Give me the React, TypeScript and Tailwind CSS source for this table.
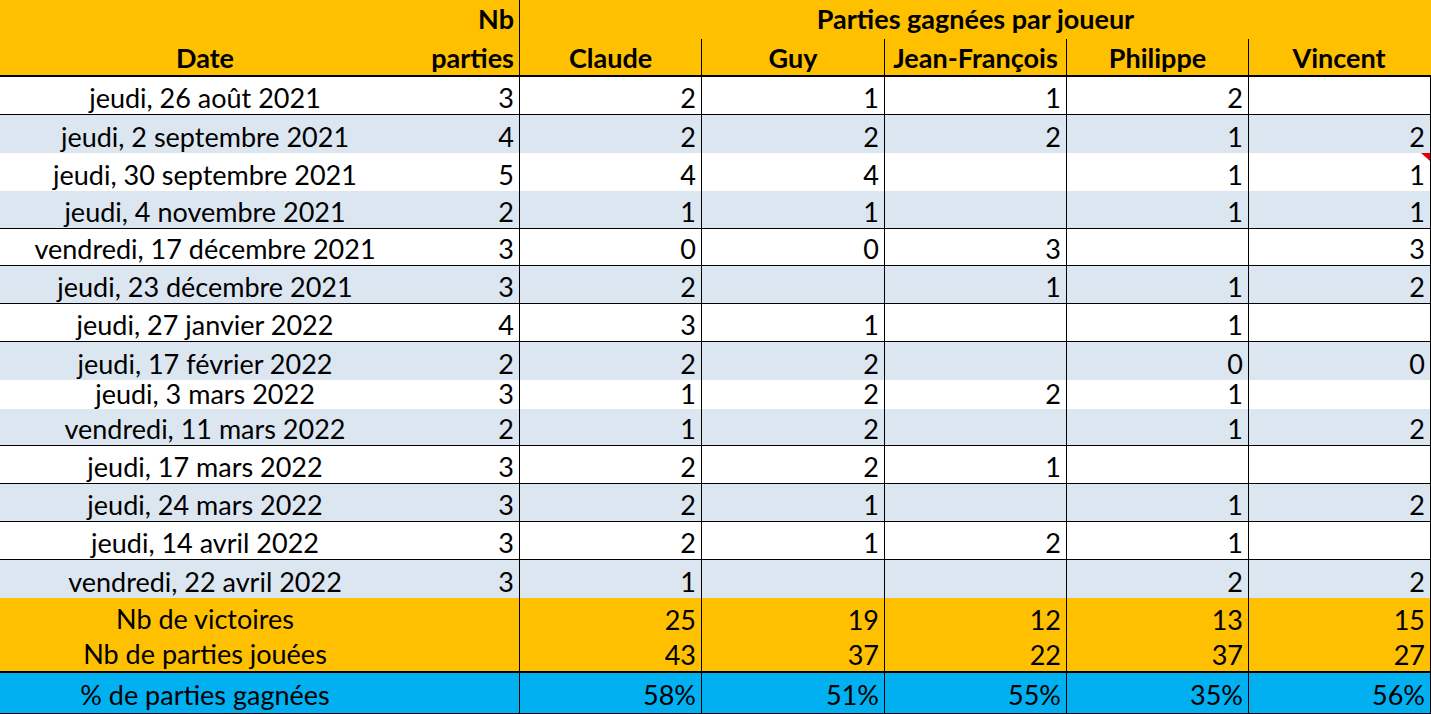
import React from 'react';

type Row = {
  date: string;
  nb: string;
  wins: string[];
  h: string;
  line: boolean;
  alt: boolean;
  note?: boolean;
};

const rows: Row[] = [
  { date: 'jeudi, 26 août 2021', nb: '3', wins: ['2', '1', '1', '2', ''], h: 'h-[38px]', line: true, alt: false },
  { date: 'jeudi, 2 septembre 2021', nb: '4', wins: ['2', '2', '2', '1', '2'], h: 'h-[38px]', line: false, alt: true },
  { date: 'jeudi, 30 septembre 2021', nb: '5', wins: ['4', '4', '', '1', '1'], h: 'h-[38px]', line: false, alt: false, note: true },
  { date: 'jeudi, 4 novembre 2021', nb: '2', wins: ['1', '1', '', '1', '1'], h: 'h-[38px]', line: true, alt: true },
  { date: 'vendredi, 17 décembre 2021', nb: '3', wins: ['0', '0', '3', '', '3'], h: 'h-[37px]', line: true, alt: false },
  { date: 'jeudi, 23 décembre 2021', nb: '3', wins: ['2', '', '1', '1', '2'], h: 'h-[38px]', line: true, alt: true },
  { date: 'jeudi, 27 janvier 2022', nb: '4', wins: ['3', '1', '', '1', ''], h: 'h-[38px]', line: true, alt: false },
  { date: 'jeudi, 17 février 2022', nb: '2', wins: ['2', '2', '', '0', '0'], h: 'h-[38px]', line: false, alt: true },
  { date: 'jeudi, 3 mars 2022', nb: '3', wins: ['1', '2', '2', '1', ''], h: 'h-[29px]', line: false, alt: false },
  { date: 'vendredi, 11 mars 2022', nb: '2', wins: ['1', '2', '', '1', '2'], h: 'h-[37px]', line: true, alt: true },
  { date: 'jeudi, 17 mars 2022', nb: '3', wins: ['2', '2', '1', '', ''], h: 'h-[38px]', line: true, alt: false },
  { date: 'jeudi, 24 mars 2022', nb: '3', wins: ['2', '1', '', '1', '2'], h: 'h-[38px]', line: true, alt: true },
  { date: 'jeudi, 14 avril 2022', nb: '3', wins: ['2', '1', '2', '1', ''], h: 'h-[38px]', line: true, alt: false },
  { date: 'vendredi, 22 avril 2022', nb: '3', wins: ['1', '', '', '2', '2'], h: 'h-[38px]', line: false, alt: true },
];

const players = ['Claude', 'Guy', 'Jean-François', 'Philippe', 'Vincent'];
const victoires = ['25', '19', '12', '13', '15'];
const jouees = ['43', '37', '22', '37', '27'];
const pourcent = ['58%', '51%', '55%', '35%', '56%'];

const grid = 'grid grid-cols-[410px_110px_182px_183px_182px_182px_182px]';

function Num({ v, note }: { v: string; note?: boolean }) {
  return (
    <div className="relative flex items-end justify-end border-r border-black pr-[5px] pb-[3px]">
      {note && (
        <span className="absolute right-0 top-0 h-0 w-0 border-l-[9px] border-t-[8px] border-l-transparent border-t-[#e00000]" />
      )}
      {v}
    </div>
  );
}

export default function App() {
  return (
    <div
      className="w-[1431px] h-[714px] overflow-hidden bg-white text-[27px] leading-none text-black"
      style={{ fontFamily: 'Lato, "Open Sans", sans-serif' }}
    >
      {/* en-tête */}
      <div className={`${grid} h-[39px] bg-[#ffc000] font-bold`}>
        <div />
        <div className="flex items-end justify-end border-r border-black pr-[5px] pb-[7px]">Nb</div>
        <div className="col-span-5 flex items-end justify-center pb-[7px]">Parties gagnées par joueur</div>
      </div>
      <div className={`${grid} h-[38px] border-b-2 border-black bg-[#ffc000] font-bold`}>
        <div className="flex items-end justify-center pb-[4px]">Date</div>
        <div className="flex items-end justify-end border-r border-black pr-[5px] pb-[4px]">parties</div>
        {players.map((p, i) => (
          <div
            key={p}
            className={`flex items-end justify-center pb-[4px] ${i < 4 ? 'border-r border-black' : 'mr-[2px]'}`}
          >
            {p}
          </div>
        ))}
      </div>

      {rows.map((r) => (
        <div
          key={r.date}
          className={`${grid} ${r.h} ${r.alt ? 'bg-[#dce6f1]' : 'bg-white'} ${r.line ? 'border-b border-black' : ''}`}
        >
          <div className="flex items-end justify-center pb-[3px] whitespace-nowrap">{r.date}</div>
          <Num v={r.nb} />
          {r.wins.map((w, i) => (
            <Num key={i} v={w} note={r.note && i === 4} />
          ))}
        </div>
      ))}

      {/* totaux */}
      <div className={`${grid} h-[38px] bg-[#ffc000]`}>
        <div className="flex items-end justify-center pb-[4px]">Nb de victoires</div>
        <div className="border-r border-black" />
        {victoires.map((v, i) => (
          <Num key={i} v={v} />
        ))}
      </div>
      <div className={`${grid} h-[37px] border-b-2 border-black bg-[#ffc000]`}>
        <div className="flex items-end justify-center pb-[4px]">Nb de parties jouées</div>
        <div className="border-r border-black" />
        {jouees.map((v, i) => (
          <Num key={i} v={v} />
        ))}
      </div>
      <div className={`${grid} h-[41px] border-b border-black bg-[#00b0f0]`}>
        <div className="flex items-end justify-center pb-[5px]">% de parties gagnées</div>
        <div className="border-r border-black" />
        {pourcent.map((v, i) => (
          <div key={i} className="flex items-end justify-end border-r border-black pr-[5px] pb-[5px]">
            {v}
          </div>
        ))}
      </div>
    </div>
  );
}
